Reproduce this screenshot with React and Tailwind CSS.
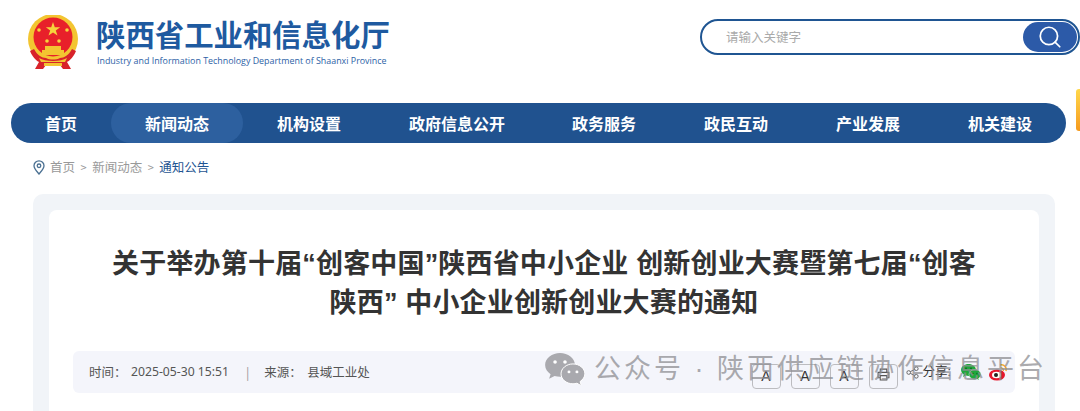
import { Search } from "lucide-react";

const NAV = ["首页", "新闻动态", "机构设置", "政府信息公开", "政务服务", "政民互动", "产业发展", "机关建设"];

const cjk = { fontFamily: '"Noto Sans CJK SC", "Noto Sans", sans-serif' };
const latinFirst = { fontFamily: '"Liberation Sans", "Noto Sans CJK SC", sans-serif' };

function Emblem() {
  return (
    <svg width="54" height="56" viewBox="0 0 54 56">
      <circle cx="26" cy="24" r="25" fill="#f3c531" />
      <circle cx="26" cy="22" r="19.5" fill="#e8202a" />
      <path d="M26 7l1.8 5.2h5.4l-4.4 3.2 1.7 5.2-4.5-3.2-4.500 3.2 1.700-5.200-4.400-3.200h5.400z" fill="#f6d33c" />
      <circle cx="12" cy="15" r="1.8" fill="#f6d33c" />
      <circle cx="40" cy="15" r="1.8" fill="#f6d33c" />
      <circle cx="20" cy="26" r="1.8" fill="#f6d33c" />
      <circle cx="32" cy="26" r="1.8" fill="#f6d33c" />
      <path d="M18 31h16v4h3v5H15v-5h3z" fill="#f3c531" />
      <path d="M3 36c3 8 9 11 9 11l-4 7h8l3-4h14l3 4h8l-4-7s6-3 9-11l-4-2c-3 6-8 9-12 9-4 2-10 2-14 0-4 0-9-3-12-9z" fill="#d8232a" />
      <path d="M12 43c6 4 22 4 28 0l-2 4H14z" fill="#f3c531" />
      <rect x="17" y="48" width="18" height="3" fill="#f3c531" />
    </svg>
  );
}

function WeChat({ size = 40, a = "#a9a9ae", b = "#a9a9ae", eye = "#fff", edge = "#fff" }) {
  return (
    <svg width={size} height={size * 0.82} viewBox="0 0 40 33">
      <path d="M15 0C7 0 0 5.300 0 12c0 3.800 2.200 7 5.500 9.300L4 26l5.500-2.800c1.800.5 3.600.8 5.500.8 8 0 15-5.300 15-12S23 0 15 0z" fill={a} />
      <path d="M28 11c-6.600 0-12 4.500-12 10s5.400 10 12 10c1.400 0 2.800-.2 4-.6l4.500 2.600-1.300-4.200C38 26.800 40 24 40 21c0-5.500-5.400-10-12-10z" fill={b} stroke={edge} strokeWidth="1" />
      <circle cx="10" cy="9" r="1.800" fill={eye} />
      <circle cx="20" cy="9" r="1.800" fill={eye} />
      <circle cx="24" cy="19" r="1.500" fill={eye} />
      <circle cx="32" cy="19" r="1.500" fill={eye} />
    </svg>
  );
}

function Weibo() {
  return (
    <svg width="19" height="18" viewBox="0 0 19 18">
      <ellipse cx="8" cy="12" rx="8" ry="5.500" fill="#e6162d" />
      <ellipse cx="7.500" cy="12" rx="4.500" ry="3.200" fill="#fff" />
      <circle cx="7" cy="12" r="2" fill="#222" />
      <path d="M11 2c4-1 7 2 6 6" fill="none" stroke="#f5a623" strokeWidth="1.500" />
      <path d="M11.500 5c2-.4 3.200 1 2.800 3" fill="none" stroke="#f5a623" strokeWidth="1.200" />
    </svg>
  );
}

export default function App() {
  return (
    <div className="relative h-[411px] w-[1080px] overflow-hidden bg-white" style={cjk}>
      {/* Header */}
      <header className="flex h-[103px] items-start justify-between">
        <div className="ml-[27px] mt-[15px] flex">
          <Emblem />
          <div className="ml-[15px]">
            <div className="mt-[-1px] text-[29.4px] font-bold leading-[38px] text-[#1e5aa0] whitespace-nowrap">
              陕西省工业和信息化厅
            </div>
            <div
              className="ml-[1px] mt-[3px] text-[8.9px] leading-[12px] text-[#2d62a6] whitespace-nowrap"
              style={{ fontFamily: '"Open Sans", sans-serif' }}
            >
              Industry and Information Technology Department of Shaanxi Province
            </div>
          </div>
        </div>
        <div className="mt-[19px] flex h-[36px] w-[380px] items-center justify-between rounded-full border-[2.5px] border-[#1f5592] pl-[24px] pr-[1px]">
          <span className="text-[12.500px] text-[#aaaaaa]">请输入关键字</span>
          <div className="flex h-[30px] w-[54px] items-center justify-center rounded-full bg-[#2c5aa8]">
            <Search size={26} color="#fff" strokeWidth={1.600} />
          </div>
        </div>
      </header>

      {/* Nav */}
      <nav className="ml-[11px] flex h-[40px] w-[1055px] items-center rounded-[20px] bg-[#20528f]">
        {NAV.map((n, i) => (
          <div
            key={n}
            className={`flex h-full items-center whitespace-nowrap rounded-[24px] text-[16px] font-bold text-white ${
              i === 3 ? "pl-[34px] pr-[33px]" : "px-[34px]"
            } ${i === 1 ? "bg-[#2d609f]" : ""}`}
          >
            {n}
          </div>
        ))}
      </nav>

      {/* Breadcrumb */}
      <div className="ml-[33px] mt-[15px] flex h-[18px] items-center text-[12.500px] text-[#999999]">
        <svg width="12" height="15" viewBox="0 0 12 15" fill="none" stroke="#4a7092" strokeWidth="1.300">
          <path d="M6 14C3.500 11 1 8.500 1 5.800a5 5 0 0 1 10 0C11 8.500 8.500 11 6 14z" />
          <circle cx="6" cy="5.800" r="1.800" />
        </svg>
        <span className="ml-[5px]">首页</span>
        <span className="mx-[5.500px] text-[11px]">&gt;</span>
        <span>新闻动态</span>
        <span className="mx-[5.500px] text-[11px]">&gt;</span>
        <span className="text-[#1f5592]">通知公告</span>
      </div>

      {/* Article panel */}
      <div className="ml-[33px] mt-[18px] h-[260px] w-[1022px] rounded-[10px] bg-[#f1f4f8] px-[16px] pt-[16px]">
        <div className="h-[240px] rounded-[8px] bg-white px-[24px] pt-[35px]">
          <h1
            className="mx-auto w-[880px] text-center text-[27px] font-bold leading-[39px] tracking-[0.170px] text-[#333333]"
            style={latinFirst}
          >
            关于举办第十届“创客中国”陕西省中小企业 创新创业大赛暨第七届“创客陕西” 中小企业创新创业大赛的通知
          </h1>
          <div className="mt-[28px] flex h-[42px] items-center rounded-[6px] bg-[#f4f5fb] pl-[16px] pr-[7px] text-[12.500px] text-[#555555]">
            <span className="w-[42px]">时间：</span>
            <span className="text-[12.200px]" style={{ fontFamily: '"Noto Sans", sans-serif' }}>2025-05-30 15:51</span>
            <span className="ml-[17px] text-[#999999]">|</span>
            <span className="ml-[15px] w-[43px]">来源：</span>
            <span>县域工业处</span>
            <div className="ml-auto flex items-center">
              {[0, 1, 2].map((k) => (
                <div
                  key={k}
                  className="mr-[10px] mt-[9px] flex h-[25px] w-[29px] justify-center rounded-[4px] border border-[#bcbcc0] pt-[2px] text-[14px] leading-[18px] text-[#333333]"
                  style={{ fontFamily: '"Liberation Sans", sans-serif' }}
                >
                  A
                </div>
              ))}
              <div className="mt-[9px] flex h-[25px] w-[29px] justify-center rounded-[4px] border border-[#bcbcc0] pt-[3px]">
                <svg width="13" height="13" viewBox="0 0 12 12" fill="none" stroke="#555" strokeWidth="1">
                  <path d="M3 4V1h6v3M3 9H1V4h10v5H9M3 7h6v4H3z" />
                </svg>
              </div>
              <svg className="ml-[8px]" width="13" height="13" viewBox="0 0 12 12" fill="none" stroke="#666" strokeWidth="0.900">
                <circle cx="2.500" cy="6" r="1.700" />
                <circle cx="9.500" cy="2.500" r="1.700" />
                <circle cx="9.500" cy="9.500" r="1.700" />
                <path d="M4 5.200l4-2M4 6.800l4 2" />
              </svg>
              <span className="ml-[4px] text-[12.500px] text-[#333333]" style={latinFirst}>分享:</span>
              <span className="ml-[10px]"><WeChat size={20} a="#1fa83b" b="#1fa83b" eye="#0c6a20" edge="#f4f5fb" /></span>
              <span className="ml-[8px]"><Weibo /></span>
            </div>
          </div>
        </div>
      </div>

      {/* Floating side tab */}
      <div className="absolute right-0 top-[89px] h-[42px] w-[4px] rounded-l-[3px] bg-gradient-to-b from-[#ffd84a] to-[#f59a1c]" />

      {/* Watermark */}
      <div className="absolute left-[545px] top-[352px] flex items-center">
        <WeChat size={40} />
        <span
          className="ml-[9px] whitespace-nowrap text-[27px] leading-[34px] tracking-[3px] text-[#8f8f94]/75"
          style={latinFirst}
        >
          公众号 · 陕西供应链协作信息平台
        </span>
      </div>
    </div>
  );
}
